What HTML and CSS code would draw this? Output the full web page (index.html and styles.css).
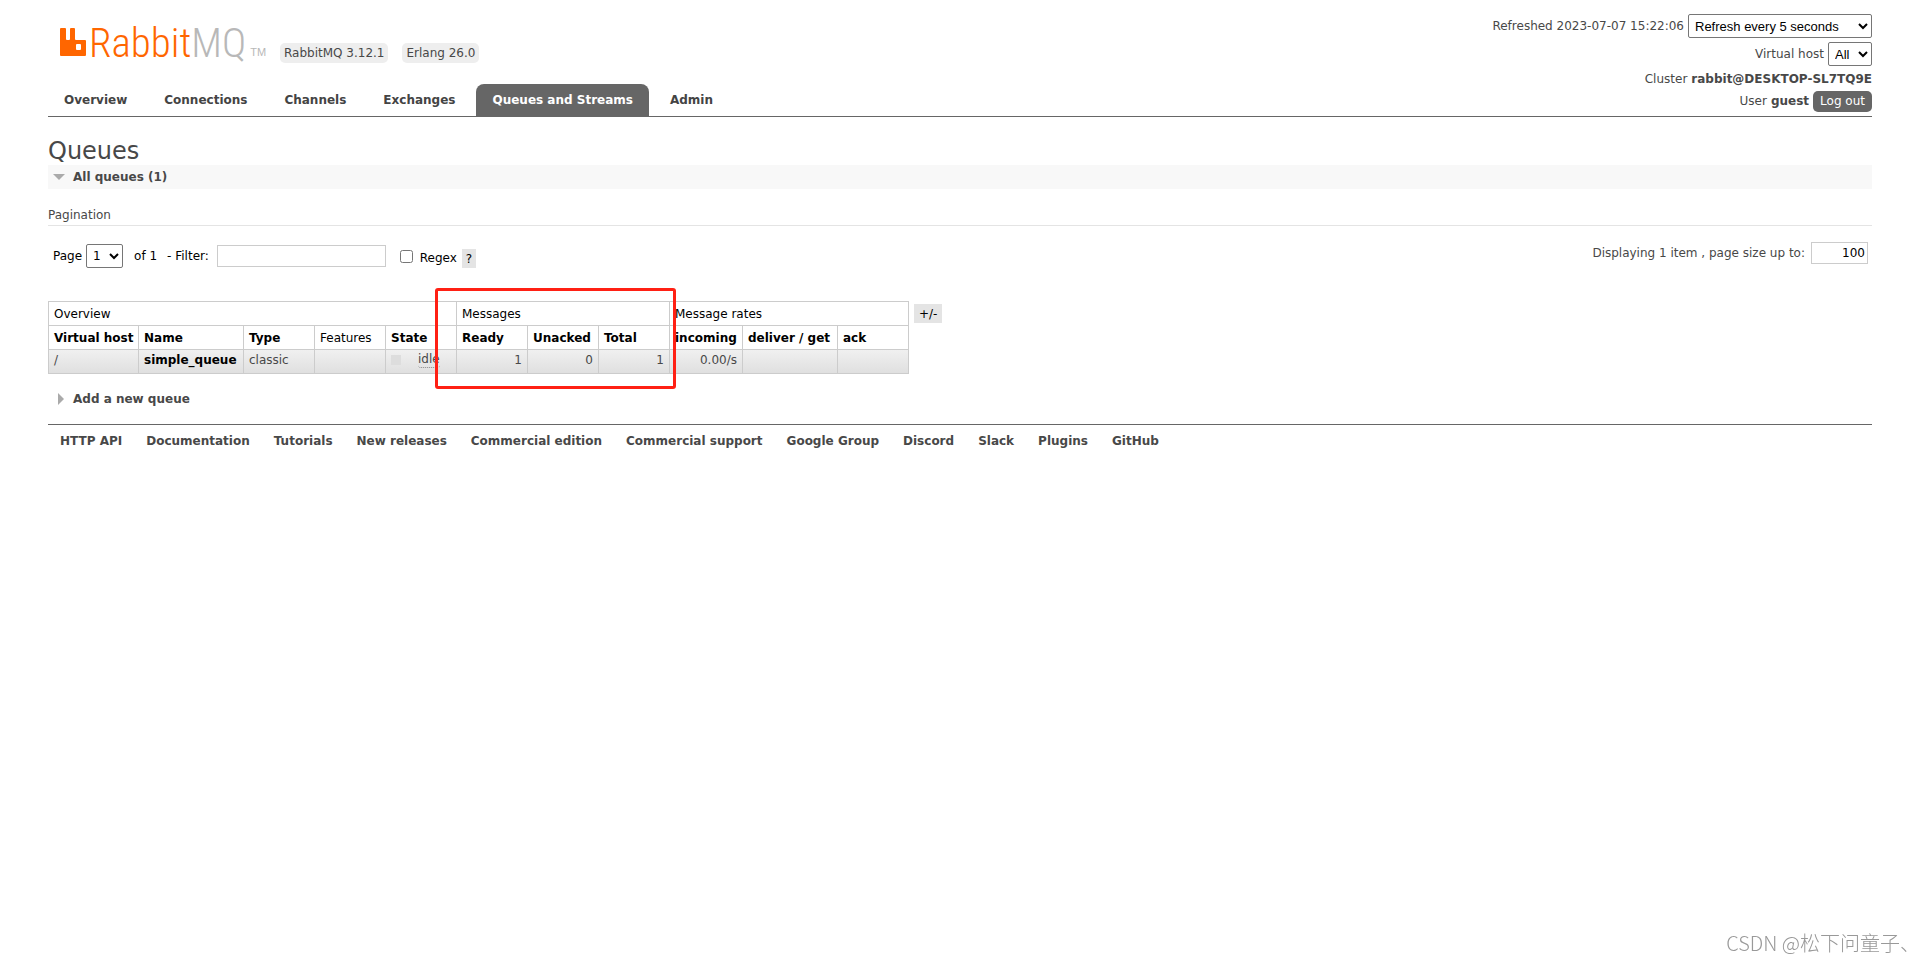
FILE: index.html
```html
<!DOCTYPE html>
<html lang="en">
<head>
<meta charset="utf-8">
<title>RabbitMQ Management</title>
<link rel="stylesheet" href="styles.css">
</head>
<body>
<header class="top">
  <div class="brand">
    <a class="logo" href="#">
      <svg class="logo-mark" viewBox="0 0 26 28" aria-hidden="true"><path fill="#f60" fill-rule="evenodd" d="M1 0h4q1 0 1 1v10q0 1 1 1h2q1 0 1-1V1q0-1 1-1h3q1 0 1 1v10q0 1 1 1h9q1 0 1 1v14q0 1-1 1H1q-1 0-1-1V1q0-1 1-1zM16 17v4q0 1 1 1h3q1 0 1-1v-4q0-1-1-1h-3q-1 0-1 1z"/></svg>
      <span class="logo-text">Rabbit<span class="logo-mq">MQ</span></span><span class="logo-tm">TM</span>
    </a>
    <span class="version">RabbitMQ 3.12.1</span>
    <span class="version">Erlang 26.0</span>
  </div>
  <div class="status">
    <div class="status-row refresh"><label for="refresh">Refreshed 2023-07-07 15:22:06</label><select id="refresh"><option>Refresh every 5 seconds</option></select></div>
    <div class="status-row vhost"><label for="vhost">Virtual host</label><select id="vhost"><option>All</option></select></div>
    <div class="status-row cluster">Cluster <b>rabbit@DESKTOP-SL7TQ9E</b></div>
    <div class="status-row user">User <b>guest</b><button class="logout" type="button">Log out</button></div>
  </div>
  <nav class="tabs">
    <a href="#">Overview</a>
    <a href="#">Connections</a>
    <a href="#">Channels</a>
    <a href="#">Exchanges</a>
    <a class="selected" href="#">Queues and Streams</a>
    <a href="#">Admin</a>
  </nav>
</header>
<main>
  <h1>Queues</h1>
  <h2 class="section open"><svg class="arrow" viewBox="0 0 12 12" aria-hidden="true"><path fill="#aaa" d="M0 3h12L6 9z"/></svg>All queues (1)</h2>
  <h3>Pagination</h3>
  <div class="pagination">
    <div class="filters">
      <label for="page">Page</label>
      <select id="page"><option>1</option></select>
      <span class="of">of 1</span>
      <label for="filter">- Filter:</label>
      <input class="filter" id="filter" type="text">
      <input class="regex" id="regex" type="checkbox">
      <label class="regex-label" for="regex">Regex</label>
      <button class="help" type="button">?</button>
    </div>
    <div class="paging">
      <label for="size">Displaying 1 item , page size up to:</label>
      <input class="size" id="size" type="text" value="100">
    </div>
  </div>
  <div class="listing">
    <table>
      <colgroup><col class="c-vhost"><col class="c-name"><col><col><col><col><col><col><col class="c-in"><col class="c-get"><col></colgroup>
      <thead>
        <tr><th colspan="5">Overview</th><th colspan="3">Messages</th><th colspan="3">Message rates</th></tr>
        <tr class="heads"><th>Virtual host</th><th>Name</th><th>Type</th><th class="plain">Features</th><th>State</th><th>Ready</th><th>Unacked</th><th>Total</th><th>incoming</th><th>deliver / get</th><th>ack</th></tr>
      </thead>
      <tbody>
        <tr><td>/</td><td><a href="#">simple_queue</a></td><td>classic</td><td></td><td><span class="state"><i class="dot"></i><abbr>idle</abbr></span></td><td class="num">1</td><td class="num">0</td><td class="num">1</td><td class="num">0.00/s</td><td></td><td></td></tr>
      </tbody>
    </table>
    <button class="columns" type="button">+/-</button>
    <div class="highlight"></div>
  </div>
  <h2 class="section"><svg class="arrow" viewBox="0 0 12 12" aria-hidden="true"><path fill="#aaa" d="M5 0v12l6-6z"/></svg>Add a new queue</h2>
</main>
<footer>
  <a href="#">HTTP API</a>
  <a href="#">Documentation</a>
  <a href="#">Tutorials</a>
  <a href="#">New releases</a>
  <a href="#">Commercial edition</a>
  <a href="#">Commercial support</a>
  <a href="#">Google Group</a>
  <a href="#">Discord</a>
  <a href="#">Slack</a>
  <a href="#">Plugins</a>
  <a href="#">GitHub</a>
</footer>
<div class="watermark">CSDN @松下问童子、</div>
</body>
</html>
```
FILE: styles.css
```css
* { box-sizing: border-box; }
body {
  margin: 0;
  padding: 12px 48px;
  background: #fff;
  color: #484848;
  font: 12px/16px Verdana, "DejaVu Sans", sans-serif;
}
a { color: inherit; font-weight: bold; text-decoration: none; }
button, input, select { margin: 0; font: inherit; color: #000; }
select {
  height: 24px;
  padding: 0 2px;
  border: 1px solid #767676;
  border-radius: 2px;
  background: #fff;
}

.top {
  display: grid;
  grid-template-columns: 1fr auto;
  border-bottom: 1px solid #666;
}
.brand { display: flex; align-items: flex-start; padding: 16px 0 0 12px; }
.logo { display: flex; align-items: flex-start; width: 220px; font-weight: normal; }
.logo-mark { width: 26px; height: 28px; margin-right: 3px; }
.logo-text {
  color: #f60;
  font: 300 41px/30px "Liberation Sans Narrow", "Roboto Condensed", "DejaVu Sans Condensed", sans-serif;
}
.logo-mq { color: #b8b8b8; }
.logo-tm { margin: 15px 0 0 4px; color: #b8b8b8; font: 11px/18px "Liberation Sans", sans-serif; }
.version {
  margin: 15px 14px 0 0;
  padding: 2px 4px;
  border-radius: 5px;
  background: #eee;
}
.status { grid-row: 1 / span 2; grid-column: 2; padding-bottom: 4px; }
.status-row { display: flex; justify-content: flex-end; align-items: center; gap: 4px; }
.refresh, .vhost { height: 28px; }
.cluster { height: 22px; }
.user { height: 22px; }
#refresh, #vhost { font: 13px "Liberation Sans", Arial, sans-serif; }
#refresh { width: 184px; }
#vhost { width: 44px; }
.logout {
  height: 21px;
  padding: 0 7px 1px;
  border: 0;
  border-radius: 5px;
  background: #666;
  color: #fff;
}
.tabs { display: flex; align-items: flex-end; gap: 5px; }
.tabs a { padding: 8px 16px; border-radius: 8px 8px 0 0; color: #444; }
.tabs .selected { background: #666; color: #fff; }

h1 { margin: 20px 0 0; font-size: 24px; line-height: 28px; font-weight: normal; }
.section {
  display: flex;
  align-items: center;
  gap: 8px;
  height: 24px;
  margin: 0;
  padding-left: 5px;
  font-size: 12px;
}
.open { background: #f8f8f8; }
.arrow { width: 12px; height: 12px; }
h3 {
  margin: 18px 0 0;
  padding-bottom: 2px;
  border-bottom: 1px solid #e4e4e4;
  font-size: 12px;
  font-weight: normal;
}
.pagination { display: flex; justify-content: space-between; padding-top: 16px; }
.filters { display: flex; align-items: center; height: 28px; padding-left: 5px; color: #000; }
#page { width: 37px; margin: 0 11px 0 4px; }
.of { margin-right: 10px; }
input[type="text"] { height: 22px; border: 1px solid #ccc; padding: 2px; }
.filter { width: 169px; margin: 0 14px 0 8px; }
.regex { width: 13px; height: 13px; margin-right: 7px; }
.regex-label { padding-top: 4px; }
.help { height: 19px; margin: 5px 0 0 5px; padding: 0 4px; border: 0; background: #e4e4e4; }
.paging { display: flex; align-items: center; gap: 6px; height: 22px; padding-right: 4px; }
.size { width: 57px; text-align: right; }

.listing { position: relative; display: flex; align-items: flex-start; gap: 5px; margin: 31px 0 13px; }
table { width: 861px; border-collapse: collapse; table-layout: fixed; }
.c-vhost { width: 90px; }
.c-name { width: 105px; }
.c-in { width: 73px; }
.c-get { width: 95px; }
th, td { height: 24px; padding: 0 5px; border: 1px solid #ccc; text-align: left; white-space: nowrap; }
th { color: #000; font-weight: normal; }
.heads th { font-weight: bold; }
.heads .plain { font-weight: normal; }
td { padding-bottom: 4px; }
td a { color: #000; }
tbody tr { background: linear-gradient(#f0f0f0, #dfdfdf); }
.num { text-align: right; }
.state { display: flex; align-items: center; gap: 17px; }
.dot { width: 10px; height: 10px; background: #ddd; }
.state abbr { border-bottom: 1px dotted #888; border-radius: 3px; line-height: 15px; }
.columns { height: 19px; margin-top: 3px; padding: 0 5px; border: 0; background: #e4e4e4; }
.highlight {
  position: absolute;
  left: 387px;
  top: -13px;
  width: 241px;
  height: 101px;
  border: 3px solid #ff2014;
  border-radius: 3px;
}

footer { display: flex; flex-wrap: wrap; gap: 24px; margin-top: 13px; padding: 8px 12px; border-top: 1px solid #666; }
.watermark {
  position: fixed;
  right: 0;
  bottom: 4px;
  color: #999;
  font: 300 20px/28px "Noto Sans CJK SC", sans-serif;
}
```
